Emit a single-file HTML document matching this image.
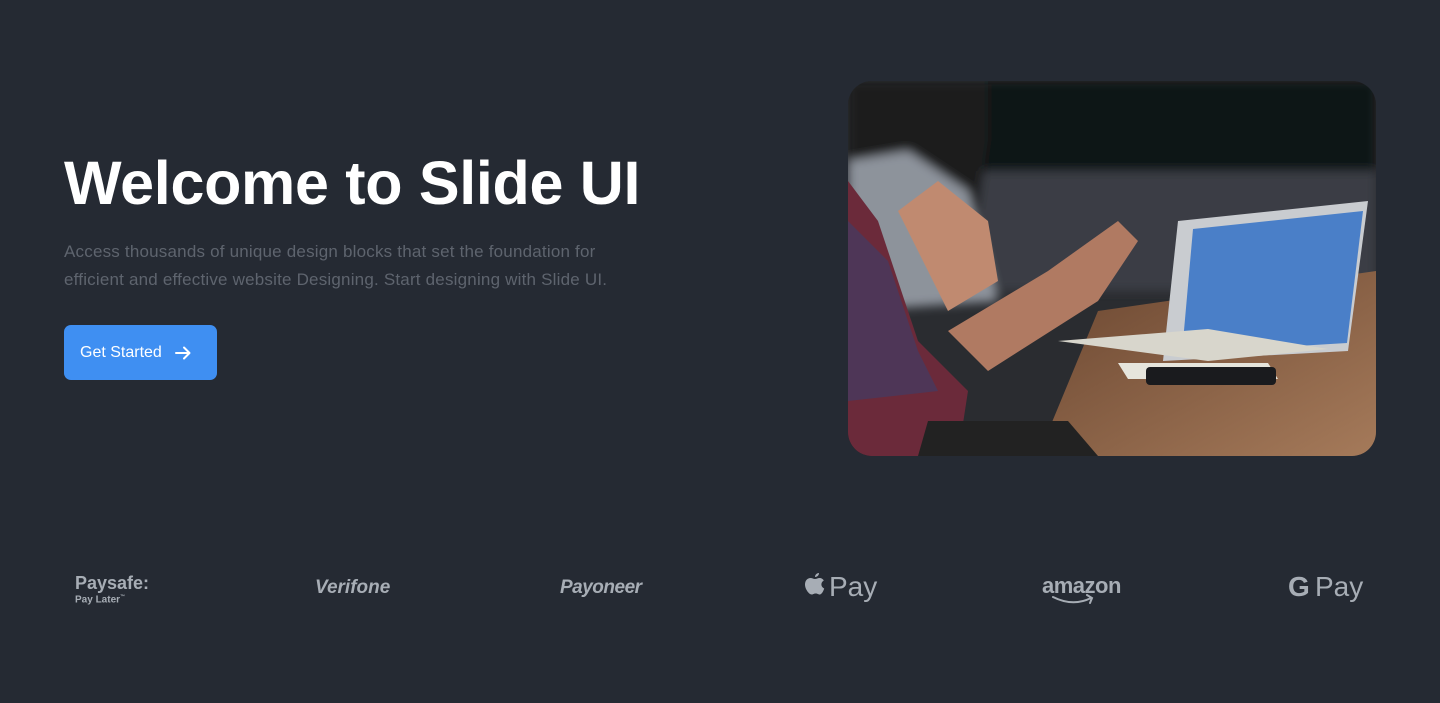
<!DOCTYPE html>
<html><head><style>
body{margin:0;width:1440px;height:703px;background:#252a33;font-family:"Liberation Sans",sans-serif;overflow:hidden;position:relative}
h1{position:absolute;left:64px;top:148px;margin:0;font-size:61px;font-weight:700;color:#fff;letter-spacing:-0.3px;white-space:nowrap}
p{position:absolute;left:64px;top:238px;margin:0;font-size:17px;line-height:28px;color:#5e646e;width:590px;letter-spacing:0.2px}
.btn{position:absolute;left:64px;top:325px;width:153px;height:55px;background:#3f8ff2;border-radius:7px;color:#fff;font-size:16px;display:flex;align-items:center;padding-left:16px;box-sizing:border-box}
.img{position:absolute;left:848px;top:81px;width:528px;height:375px;border-radius:24px;overflow:hidden;background:#1a1c20}
.logo{position:absolute;color:#a7adb5;font-weight:700;white-space:nowrap}
</style></head><body>
<h1>Welcome to Slide UI</h1>
<p>Access thousands of unique design blocks that set the foundation for efficient and effective website Designing. Start designing with Slide UI.</p>
<div class="btn">Get Started<svg width="20" height="20" viewBox="0 0 20 20" style="margin-left:11px"><path d="M3 10h13M11 4.5l5.5 5.5-5.5 5.5" stroke="#fff" stroke-width="2" fill="none" stroke-linecap="round" stroke-linejoin="round"/></svg></div>
<div class="img"><svg width="528" height="375" viewBox="0 0 528 375">
<defs><linearGradient id="tb" x1="0" y1="0" x2="1" y2="1"><stop offset="0" stop-color="#6a4630"/><stop offset="1" stop-color="#a57a5a"/></linearGradient>
<filter id="b"><feGaussianBlur stdDeviation="5"/></filter></defs>
<rect width="528" height="375" fill="#2a2c30"/>
<g filter="url(#b)">
<rect x="130" y="0" width="398" height="180" fill="#101214"/>
<rect x="120" y="90" width="408" height="120" fill="#3b3e44"/>
<path d="M0 0h140v60l-20 140H0z" fill="#1b1c1f"/>
<path d="M0 80l60-10 60 40 30 110-150 10z" fill="#8d939b"/>
</g>
<path d="M190 375L250 230 528 190V375z" fill="url(#tb)"/>
<path d="M330 140l190-20-20 150-185 10z" fill="#c9ccd0"/>
<path d="M345 148l170-18-16 132-165 10z" fill="#4a7fc8"/>
<path d="M210 260l150-12 120 20-120 12z" fill="#d8d6cc"/>
<path d="M270 282h150l10 16H280z" fill="#e6e5dc"/>
<rect x="298" y="286" width="130" height="18" rx="4" fill="#1a1b1e"/>
<path d="M0 100l30 40 40 120 50 50-10 65H0z" fill="#6b2a3a"/>
<path d="M0 140l40 40 30 90 20 40-90 10z" fill="#3a3f6a" opacity=".6"/>
<path d="M50 130l40-30 50 40 10 60-50 30z" fill="#c08a70"/>
<path d="M100 250l100-60 70-50 20 20-40 60-110 70z" fill="#b07a62"/>
<path d="M80 340l140 0 30 35H70z" fill="#222"/>
</svg></div>
<div class="logo" style="left:75px;top:573px;font-size:18px">Paysafe:</div>
<div class="logo" style="left:75px;top:594px;font-size:10px">Pay Later<sup style="font-size:5px">™</sup></div>
<div class="logo" style="left:315px;top:577px;font-size:19px;font-style:italic">Verifone</div>
<div class="logo" style="left:560px;top:577px;font-size:19px;font-style:italic;letter-spacing:-0.5px">Payoneer</div>
<svg class="logo" style="left:804px;top:572px" width="22" height="26" viewBox="0 0 22 26"><path d="M15 1c0 2-1.5 4-4 4 0-2 1.6-4 4-4zM11 7c1.5 0 3-1 4.5-1 2 0 3.5 1 4.3 2.5-3.5 2-3 6.5.4 8-.8 2.5-2.5 6-4.5 6-1.5 0-2-1-4-1s-2.5 1-4 1C5 22.5 1 17 1 12.5 1 8.5 3.6 6 6.5 6 8.2 6 9.5 7 11 7z" fill="#a7adb5"/></svg>
<div class="logo" style="left:829px;top:571px;font-size:28px;font-weight:400">Pay</div>
<div class="logo" style="left:1042px;top:573px;font-size:22px;letter-spacing:-0.5px">amazon</div>
<svg class="logo" style="left:1051px;top:594px" width="46" height="12" viewBox="0 0 46 12"><path d="M2 3q20 10 38 1M36 1l5 3-2 5" stroke="#a7adb5" stroke-width="2" fill="none" stroke-linecap="round"/></svg>
<div class="logo" style="left:1288px;top:571px;font-size:28px">G</div>
<div class="logo" style="left:1315px;top:571px;font-size:28px;font-weight:400">Pay</div>
</body></html>
